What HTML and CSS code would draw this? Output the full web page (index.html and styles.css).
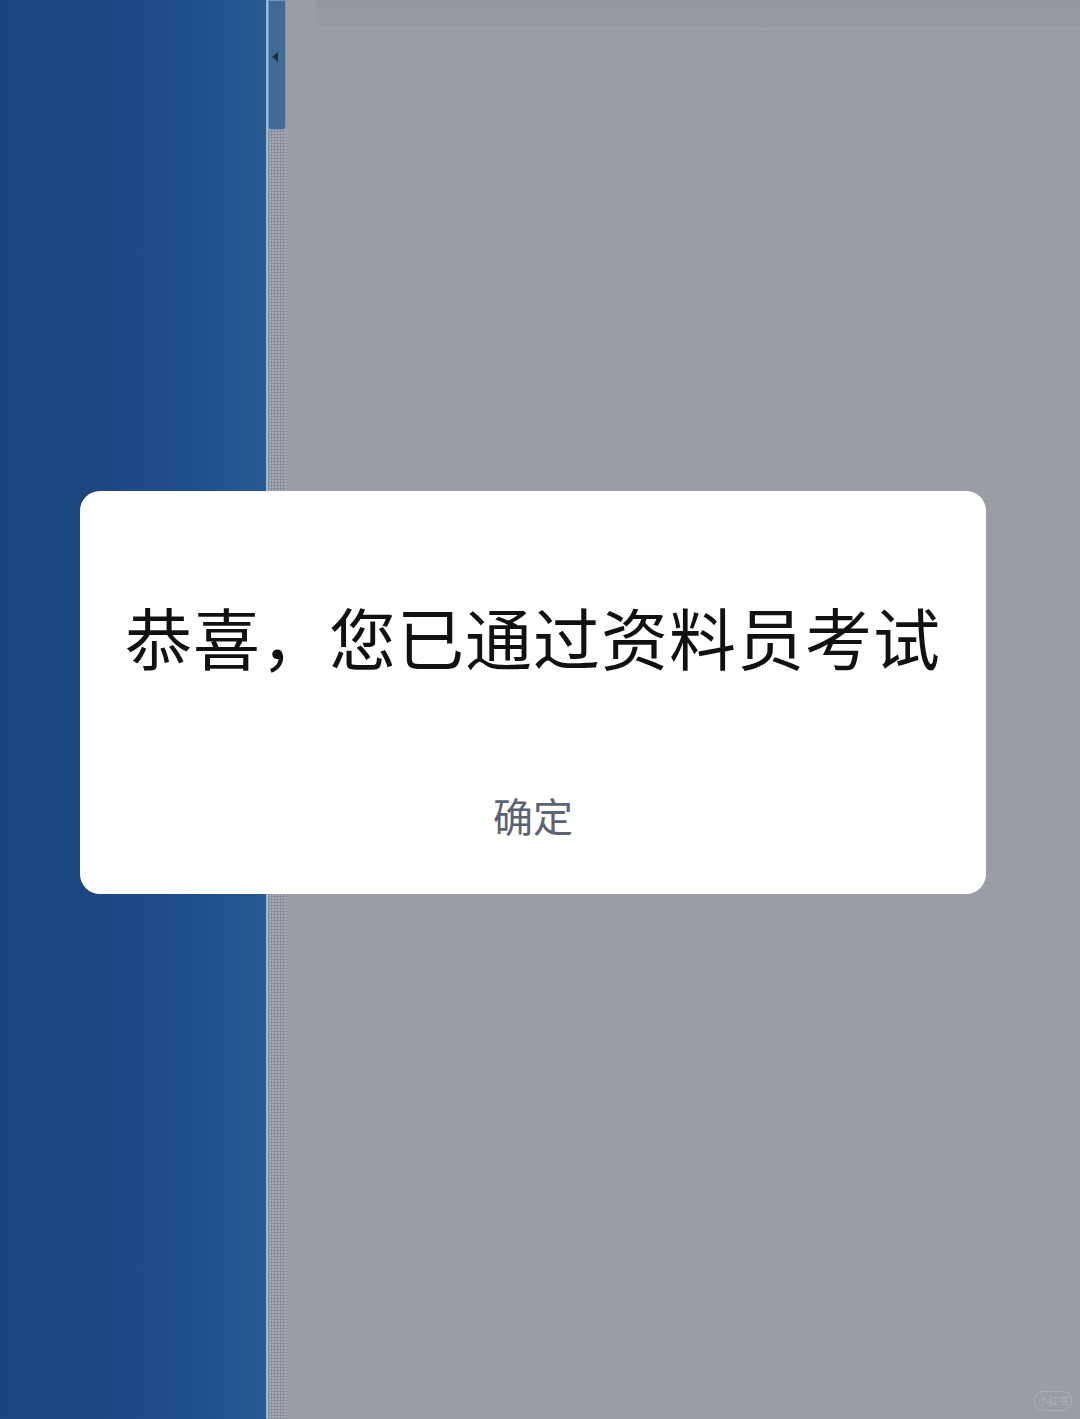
FILE: index.html
```html
<!DOCTYPE html>
<html lang="zh-CN">
<head>
<meta charset="utf-8">
<title>考试结果</title>
<link rel="stylesheet" href="styles.css">
</head>
<body>
<div class="screen">
  <div class="side"></div>
  <div class="scrollbar">
    <div class="thumb"><span class="arrow"></span></div>
    <div class="track"></div>
  </div>
  <div class="main">
    <div class="topbar"></div>
  </div>
</div>
<div class="dialog">
  <div class="dialog-title">恭喜，您已通过资料员考试</div>
  <div class="dialog-btn">确定</div>
</div>
<div class="watermark">小红书</div>
</body>
</html>
```
FILE: styles.css
```css
html, body {
  margin: 0;
  padding: 0;
  width: 1080px;
  height: 1419px;
  overflow: hidden;
  font-family: "Noto Sans CJK SC", "Noto Sans", sans-serif;
}
.screen {
  display: flex;
  width: 1080px;
  height: 1419px;
}
.side {
  width: 266px;
  flex: none;
  background: linear-gradient(90deg, #1b4580 0%, #1c4783 40%, #20508c 75%, #275a93 100%);
}
.scrollbar {
  width: 20px;
  flex: none;
  display: flex;
  flex-direction: column;
  border-left: 2px solid #9cb8d2;
  box-sizing: border-box;
  background: #a3a9b4;
}
.thumb {
  height: 130px;
  flex: none;
  background: #3f6c97;
  border: 1px solid #7297ba;
  border-radius: 0 0 3px 3px;
  box-sizing: border-box;
  position: relative;
}
.arrow {
  position: absolute;
  left: 3px;
  top: 51px;
  width: 0;
  height: 0;
  border-top: 5px solid transparent;
  border-bottom: 5px solid transparent;
  border-right: 6px solid #1d2f45;
}
.track {
  flex: 1;
  background-color: #a4a9b3;
  background-image:
    repeating-linear-gradient(0deg, rgba(120,125,140,0.55) 0 1px, transparent 1px 3px),
    repeating-linear-gradient(90deg, rgba(120,125,140,0.55) 0 1px, transparent 1px 3px);
}
.main {
  flex: 1;
  background: #9a9da4;
  display: flex;
  flex-direction: column;
}
.topbar {
  height: 28px;
  margin-left: 30px;
  background: linear-gradient(180deg, #94979f 0%, #989ba2 100%);
  border-bottom: 1px solid #a0a3a9;
}
.dialog {
  position: absolute;
  left: 80px;
  top: 491px;
  width: 906px;
  height: 403px;
  background: #ffffff;
  border-radius: 20px;
  display: flex;
  flex-direction: column;
  align-items: center;
  box-sizing: border-box;
}
.dialog-title {
  margin-top: 97px;
  font-size: 67px;
  line-height: 96px;
  color: #111111;
  font-weight: 400;
  letter-spacing: 1px;
}
.dialog-btn {
  margin-top: 103px;
  font-size: 40px;
  line-height: 56px;
  color: #5c6473;
  font-weight: 400;
}
.watermark {
  position: absolute;
  left: 1034px;
  top: 1391px;
  width: 36px;
  height: 18px;
  border-radius: 9px;
  border: 1px solid rgba(255,255,255,0.18);
  color: rgba(255,255,255,0.25);
  font-size: 10px;
  line-height: 18px;
  text-align: center;
}
```
